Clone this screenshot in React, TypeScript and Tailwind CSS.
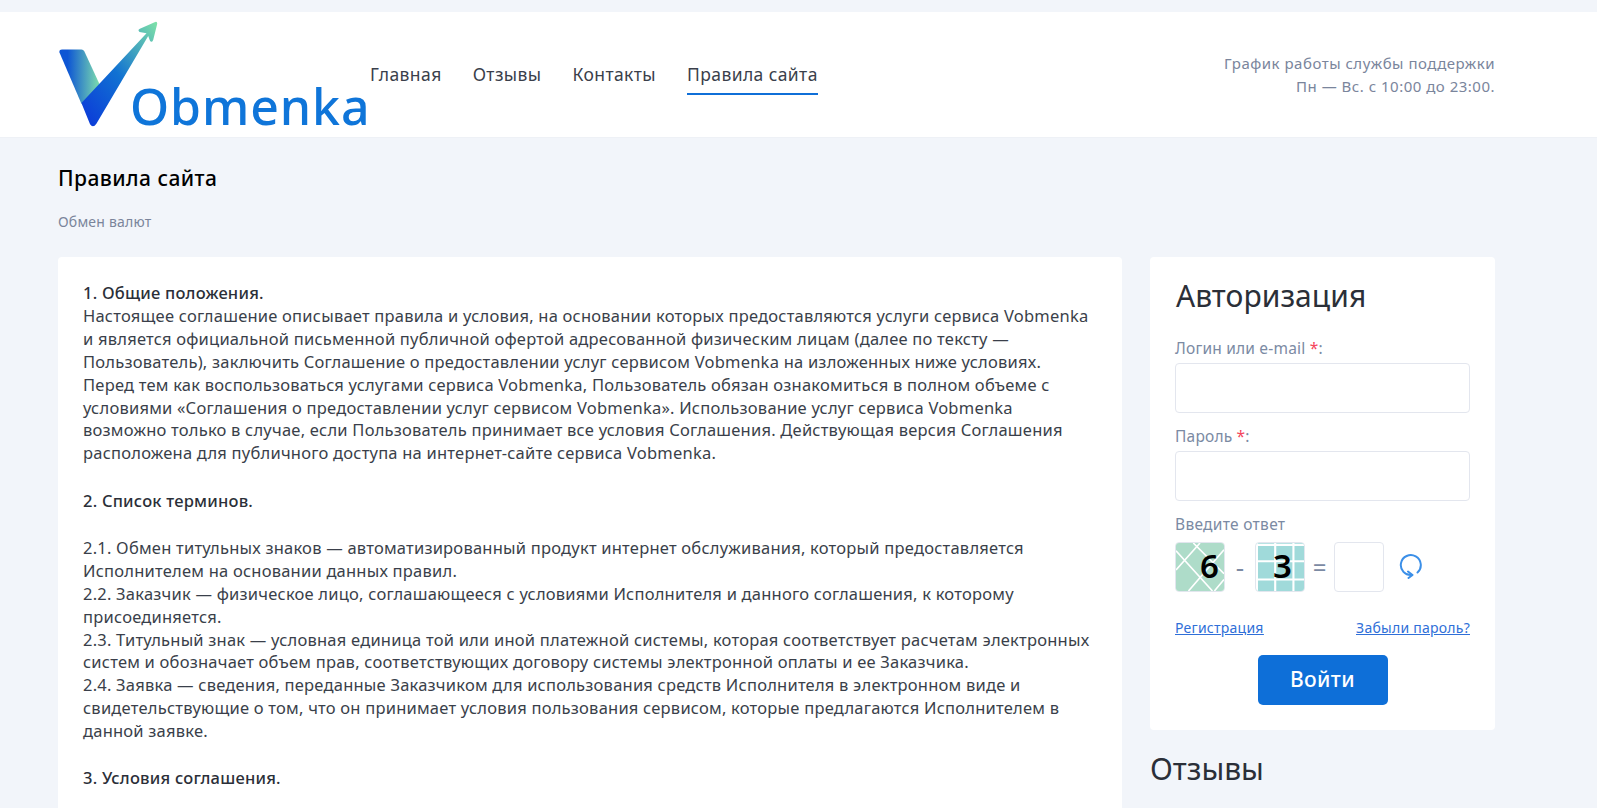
import React from 'react';

const font = { fontFamily: '"Noto Sans", "Open Sans", sans-serif' };

const Logo = () => (
  <div className="relative w-[312px] h-[109px] shrink-0">
    <svg viewBox="50 60 300 325" className="absolute left-0 top-0 w-[100px] h-[108px]">
      <defs>
        <linearGradient id="lg1" x1="0" y1="0" x2="1" y2="0">
          <stop offset="0.2" stopColor="#0d55d4" />
          <stop offset="1" stopColor="#7fe0ad" />
        </linearGradient>
        <linearGradient id="lg2" x1="0.1" y1="0.95" x2="1" y2="0">
          <stop offset="0" stopColor="#0c3fd8" />
          <stop offset="0.45" stopColor="#1172d2" />
          <stop offset="1" stopColor="#7fe3a8" />
        </linearGradient>
      </defs>
      <path d="M62 149 L120 149 Q126 149 129 155 L176 256 L120 312 L54 158 Q52 149 62 149 Z" fill="url(#lg1)" />
      <path d="M120 310 L316 100 L295 96 Q288 90 296 86 L342 66 Q349 64 348 72 L336 120 Q331 130 326 122 L321 108 L165 372 Q155 386 146 374 Z" fill="url(#lg2)" />
    </svg>
    <span className="absolute left-[72px] top-[56px] text-[50px] leading-[60px] font-medium text-[#0f75d9] tracking-[0.9px]">Obmenka</span>
  </div>
);

const Captcha = ({ n, kind }: { n: string; kind: 'diag' | 'grid' }) => (
  <div className="relative w-[50px] h-[50px] rounded-[4px] border border-[#e2e6ee] overflow-hidden">
    <svg viewBox="0 0 50 50" className="absolute inset-0 w-full h-full">
      {kind === 'diag' ? (
        <g>
          <rect width="50" height="50" fill="#aedcc9" />
          <path d="M0 8 L38 50 M18 0 L50 32 M0 28 L25 0 M13 50 L50 7 M40 50 L50 38" stroke="#fff" strokeWidth="1.7" fill="none" />
        </g>
      ) : (
        <g>
          <rect width="50" height="50" fill="#a0dada" />
          <path d="M0 2 H50 M0 19 H50 M0 38 H50 M1 0 V50 M20 0 V50 M39 0 V50" stroke="#fff" strokeWidth="2.2" fill="none" />
        </g>
      )}
    </svg>
    {kind === 'diag' ? (
      <span className="absolute left-[24px] top-[5px] text-[33px] font-semibold text-black leading-[36px]">{n}</span>
    ) : (
      <span className="absolute left-[17px] top-[5px] text-[33px] font-semibold text-black leading-[36px]">{n}</span>
    )}
  </div>
);

const Field = ({ label }: { label: string }) => (
  <div className="mb-[12px]">
    <div className="text-[15.5px] leading-[22px] tracking-[0.2px] text-[#7b8aa3] mb-[4px]">
      {label} <span className="text-[#f5455c]">*</span>:
    </div>
    <div className="h-[50px] rounded-[4px] border border-[#e3e6ee] bg-white" />
  </div>
);

const Para = ({ children }: { children: React.ReactNode }) => (
  <p className="whitespace-pre-line">{children}</p>
);

const navItem = 'h-[43px] leading-[44px] tracking-[0.4px]';

export default function App() {
  return (
    <div style={font} className="h-[808px] overflow-hidden bg-[#f2f5fa]">
      <div className="h-[12px]" />
      <header className="h-[126px] bg-white border-b border-[#eef1f6] pl-[58px] pr-[102px] flex items-center">
        <Logo />
        <nav className="flex gap-[31px] text-[17.5px] text-[#3a3f4b] -mt-[3px]">
          <a className={navItem}>Главная</a>
          <a className={navItem}>Отзывы</a>
          <a className={navItem}>Контакты</a>
          <a className={`${navItem} border-b-2 border-[#0f6fd8]`}>Правила сайта</a>
        </nav>
        <div className="ml-auto mt-[1px] text-right text-[15px] leading-[23px] tracking-[0.5px] text-[#7a859c]">
          График работы службы поддержки
          <br />
          Пн — Вс. с 10:00 до 23:00.
        </div>
      </header>

      <main className="pl-[58px] pr-[102px]">
        <h1 className="text-[21px] font-medium tracking-[0.45px] text-black leading-[28px] mt-[26px]">Правила сайта</h1>
        <div className="text-[14px] tracking-[0.2px] text-[#7b859b] leading-[20px] mt-[20px]">Обмен валют</div>

        <div className="flex items-start gap-[28px] mt-[25px]">
          <section className="w-[1064px] h-[600px] bg-white rounded-[4px] pl-[25px] pr-[20px] pt-[25px] text-[16.5px] leading-[22.9px] tracking-[0.22px] text-[#3a3f4a]">
            <p className="font-medium text-[#2b2f38]">1. Общие положения.</p>
            <Para>{`Настоящее соглашение описывает правила и условия, на основании которых предоставляются услуги сервиса Vobmenka
и является официальной письменной публичной офертой адресованной физическим лицам (далее по тексту —
Пользователь), заключить Соглашение о предоставлении услуг сервисом Vobmenka на изложенных ниже условиях.
Перед тем как воспользоваться услугами сервиса Vobmenka, Пользователь обязан ознакомиться в полном объеме с
условиями «Соглашения о предоставлении услуг сервисом Vobmenka». Использование услуг сервиса Vobmenka
возможно только в случае, если Пользователь принимает все условия Соглашения. Действующая версия Соглашения
расположена для публичного доступа на интернет-сайте сервиса Vobmenka.`}</Para>
            <p className="mt-[24.4px] font-medium text-[#2b2f38]">2. Список терминов.</p>
            <div className="mt-[24.4px]">
              <Para>{`2.1. Обмен титульных знаков — автоматизированный продукт интернет обслуживания, который предоставляется
Исполнителем на основании данных правил.
2.2. Заказчик — физическое лицо, соглашающееся с условиями Исполнителя и данного соглашения, к которому
присоединяется.
2.3. Титульный знак — условная единица той или иной платежной системы, которая соответствует расчетам электронных
систем и обозначает объем прав, соответствующих договору системы электронной оплаты и ее Заказчика.
2.4. Заявка — сведения, переданные Заказчиком для использования средств Исполнителя в электронном виде и
свидетельствующие о том, что он принимает условия пользования сервисом, которые предлагаются Исполнителем в
данной заявке.`}</Para>
            </div>
            <p className="mt-[24.4px] font-medium text-[#2b2f38]">3. Условия соглашения.</p>
          </section>

          <aside className="w-[345px] shrink-0">
            <div className="h-[473px] bg-white rounded-[4px] pl-[25px] pr-[25px] pt-[20px]">
              <h2 className="text-[30px] leading-[38px] tracking-[0.05px] text-[#2b2f38] mb-[22px] pl-[1px]">Авторизация</h2>
              <Field label="Логин или e-mail" />
              <Field label="Пароль" />
              <div className="text-[15.5px] leading-[22px] tracking-[0.3px] text-[#7b8aa3] mb-[7px]">Введите ответ</div>
              <div className="flex items-center">
                <Captcha n="6" kind="diag" />
                <span className="w-[30px] text-center text-[26px] leading-[24px] text-[#7b8aa3]">-</span>
                <Captcha n="3" kind="grid" />
                <span className="w-[29px] text-center text-[24px] leading-[24px] text-[#7b8aa3]">=</span>
                <div className="w-[50px] h-[50px] rounded-[4px] border border-[#e3e6ee]" />
                <svg viewBox="0 0 24 26" className="ml-[15px] -mt-[3px] w-[24px] h-[26px]" fill="none" stroke="#3b8fe8" strokeWidth="2" strokeLinecap="round" strokeLinejoin="round">
                  <path d="M18.5 19.5 A10 10 0 1 0 13 22" />
                  <path d="M9 18.5 L13.5 22 L9.5 25" />
                </svg>
              </div>
              <div className="flex justify-between mt-[26px] text-[14px] tracking-[0.25px] leading-[20px] text-[#2f6fd8] underline">
                <a>Регистрация</a>
                <a>Забыли пароль?</a>
              </div>
              <button className="block mx-auto mt-[17px] w-[130px] h-[50px] rounded-[5px] bg-[#0e6fd8] text-white text-[21px] tracking-[0.4px] font-medium">Войти</button>
            </div>
            <h2 className="text-[30px] leading-[38px] text-[#2b2f38] mt-[20px]">Отзывы</h2>
          </aside>
        </div>
      </main>
    </div>
  );
}
